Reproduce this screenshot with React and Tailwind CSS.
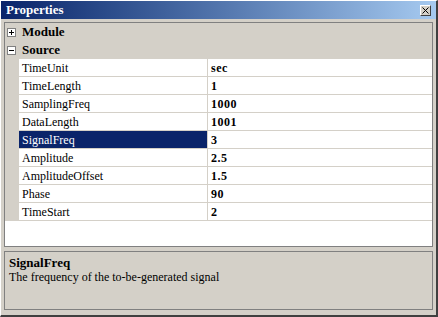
import React from 'react';

const props = [
  { name: 'TimeUnit', value: 'sec' },
  { name: 'TimeLength', value: '1' },
  { name: 'SamplingFreq', value: '1000' },
  { name: 'DataLength', value: '1001' },
  { name: 'SignalFreq', value: '3', selected: true },
  { name: 'Amplitude', value: '2.5' },
  { name: 'AmplitudeOffset', value: '1.5' },
  { name: 'Phase', value: '90' },
  { name: 'TimeStart', value: '2' },
];

function ExpandBox({ open }) {
  return (
    <div className="w-[9px] h-[9px] border border-[#808080] bg-white flex items-center justify-center relative">
      <div className="w-[5px] h-px bg-black" />
      {!open && <div className="absolute w-px h-[5px] bg-black" />}
    </div>
  );
}

function Category({ label, open }) {
  return (
    <div className="flex items-center h-[18px] bg-[#d4d0c8]">
      <div className="pl-[2px] w-[17px] shrink-0">
        <ExpandBox open={open} />
      </div>
      <span className="font-bold text-[13px]">{label}</span>
    </div>
  );
}

function PropRow({ name, value, selected }) {
  return (
    <div className="flex h-[18px] bg-[#d4d0c8]">
      <div className="w-[14px] shrink-0" />
      <div
        className={`w-[189px] shrink-0 border-b border-r border-[#d4d0c8] pl-[3px] flex items-center text-[12px] ${
          selected ? 'bg-[#0a246a] text-white' : 'bg-white text-black'
        }`}
      >
        {name}
      </div>
      <div className="flex-1 bg-white border-b border-[#d4d0c8] pl-[3px] flex items-center font-bold text-[12px] tracking-[0.5px]">
        {value}
      </div>
    </div>
  );
}

export default function App() {
  return (
    <div
      className="w-[438px] h-[317px] bg-[#d4d0c8] border-t border-l border-white border-r-2 border-b-2 border-r-[#404040] border-b-[#404040] flex flex-col text-black"
      style={{ fontFamily: '"Liberation Serif", "Times New Roman", serif' }}
    >
      {/* Title bar */}
      <div className="h-[18px] flex items-center justify-between bg-gradient-to-r from-[#0a246a] to-[#a6caf0] pl-[5px] pr-[5px]">
        <span className="text-white font-bold text-[13px]">Properties</span>
        <div className="w-[11px] h-[11px] bg-[#d4d0c8] border border-t-white border-l-white border-r-[#404040] border-b-[#404040] flex items-center justify-center">
          <svg width="7" height="7" viewBox="0 0 7 7">
            <path d="M0.5 0.5 L6.5 6.5 M6.5 0.5 L0.5 6.5" stroke="#000" strokeWidth="1" />
          </svg>
        </div>
      </div>

      {/* Grid */}
      <div className="mt-[3px] mx-[3px] h-[225px] border border-[#808080] bg-white flex flex-col">
        <Category label="Module" open={false} />
        <Category label="Source" open={true} />
        {props.map((p) => (
          <PropRow key={p.name} {...p} />
        ))}
      </div>

      {/* Help */}
      <div className="mt-[4px] mx-[3px] h-[59px] border border-[#808080] px-[4px] pt-[3px]">
        <div className="font-bold text-[13px] leading-[15px]">SignalFreq</div>
        <div className="text-[12px] leading-[15px]">The frequency of the to-be-generated signal</div>
      </div>
    </div>
  );
}
